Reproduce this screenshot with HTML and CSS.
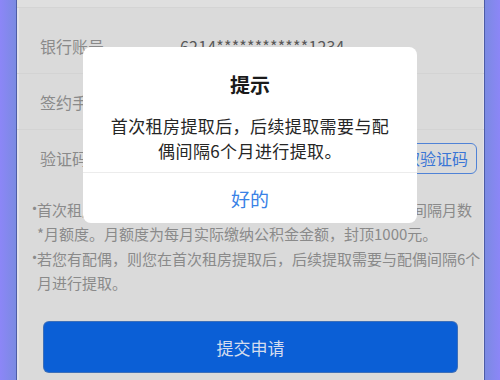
FILE: index.html
```html
<!DOCTYPE html>
<html lang="zh-CN">
<head>
<meta charset="utf-8">
<link rel="stylesheet" href="styles.css">
</head>
<body>
<div class="frame">
  <div class="edge edge-l"></div>
  <div class="page">
    <div class="topbar"></div>
    <div class="form">
      <div class="row">
        <div class="label">银行账号</div>
        <div class="value">6214************1234</div>
      </div>
      <div class="row">
        <div class="label">签约手机号</div>
        <div class="value muted">138****8888</div>
      </div>
      <div class="row">
        <div class="label">验证码</div>
        <div class="value muted">请输入验证码</div>
        <div class="code-btn">获取验证码</div>
      </div>
    </div>
    <div class="notes">
      <p class="note"><span class="dot">·</span>首次租房提取的，其可提取金额为本次提取与上次提取的间隔月数<br>*月额度。月额度为每月实际缴纳公积金金额，封顶1000元。</p>
      <p class="note"><span class="dot">·</span>若您有配偶，则您在首次租房提取后，后续提取需要与配偶间隔6个<br>月进行提取。</p>
    </div>
    <div class="submit">提交申请</div>
  </div>
  <div class="edge edge-r"></div>
</div>
<div class="modal">
  <div class="modal-body">
    <div class="modal-title">提示</div>
    <div class="modal-msg">首次租房提取后，后续提取需要与配<br>偶间隔6个月进行提取。</div>
  </div>
  <div class="modal-btn">好的</div>
</div>
</body>
</html>
```
FILE: styles.css
```css
* { box-sizing: border-box; }
html, body {
  margin: 0;
  padding: 0;
  width: 500px;
  height: 380px;
  overflow: hidden;
  font-family: "Noto Sans CJK SC", "Noto Sans", sans-serif;
}
.frame {
  display: flex;
  width: 500px;
  height: 380px;
}
.edge {
  flex: 0 0 auto;
  height: 100%;
}
.edge-l {
  width: 16px;
  background: linear-gradient(to right, #8c86f7, #7a8ae2);
}
.edge-r {
  width: 15px;
  background: linear-gradient(to right, #7a8ae2, #8c86f7);
}
.page {
  flex: 1 1 0;
  min-width: 0;
  overflow: hidden;
  height: 100%;
  background: #dadada;
  border-left: 1px solid #4d5ca6;
  border-right: 1px solid #4d5ca6;
  box-shadow: inset 2px 0 0 #e2e2ea, inset -1px 0 0 #e2e2ea;
  display: flex;
  flex-direction: column;
}
.topbar {
  height: 8px;
  background: #dfdfdf;
  border-bottom: 1px solid #d4d4d4;
  flex: 0 0 auto;
}
.form {
  padding-top: 10px;
}
.row {
  height: 56px;
  display: flex;
  align-items: center;
  padding-left: 23px;
  padding-right: 7px;
  border-bottom: 1px solid #d3d3d3;
}
.row:last-child { border-bottom: none; }
.label {
  width: 140px;
  font-size: 16px;
  color: #8a8a8a;
}
.value {
  flex: 1;
  font-size: 16px;
  color: #585858;
  letter-spacing: 0.2px;
}
.value.muted { color: #b0b0b0; }
.code-btn {
  height: 31px;
  padding: 0 8px;
  border: 1.5px solid #4f82d6;
  border-radius: 6px;
  color: #3a76d6;
  font-size: 16px;
  line-height: 28px;
}
.notes {
  margin-top: 12px;
  padding-left: 12px;
}
.note {
  margin: 0 0 1px 0;
  position: relative;
  padding-left: 8px;
  font-size: 15px;
  line-height: 24px;
  color: #8a8a8a;
  white-space: nowrap;
  letter-spacing: 0px;
}
.dot {
  position: absolute;
  left: -2px;
  top: -2px;
}
.submit {
  margin: 26px 0 0 27px;
  width: 413px;
  height: 50px;
  background: #0b5fd6;
  border-radius: 5px;
  box-shadow: 0 0 0 1px #3d6fb8;
  color: #d4dcee;
  font-size: 17px;
  display: flex;
  align-items: center;
  justify-content: center;
}
.modal {
  position: absolute;
  left: 83px;
  top: 47px;
  width: 334px;
  height: 176px;
  background: #ffffff;
  border-radius: 8px;
  display: flex;
  flex-direction: column;
}
.modal-body {
  padding-top: 25px;
  padding-bottom: 9px;
  border-bottom: 1px solid #ececec;
  text-align: center;
}
.modal-title {
  font-size: 20px;
  line-height: 26px;
  font-weight: bold;
  color: #1a1a1a;
}
.modal-msg {
  margin-top: 15px;
  font-size: 17px;
  line-height: 25px;
  color: #262626;
  letter-spacing: 0.4px;
}
.modal-btn {
  flex: 1;
  display: flex;
  align-items: center;
  justify-content: center;
  font-size: 19px;
  color: #3a82e6;
}
```
